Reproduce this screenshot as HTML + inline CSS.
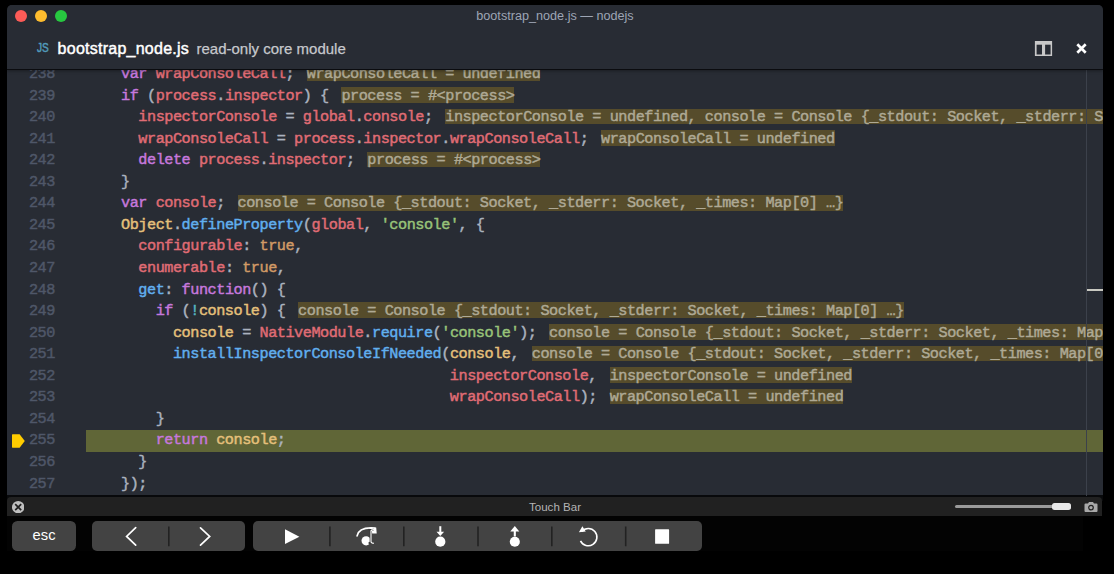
<!DOCTYPE html>
<html>
<head>
<meta charset="utf-8">
<title>bootstrap_node.js — nodejs</title>
<style>
html,body{margin:0;padding:0;}
body{width:1114px;height:574px;background:#000;overflow:hidden;position:relative;font-family:"Liberation Sans",sans-serif;}
#win{position:absolute;left:7px;top:5px;width:1096px;height:490.6px;background:#282c34;border-radius:5px 5px 0 0;overflow:hidden;}
#editor{position:absolute;left:0;top:64px;width:1096px;height:428px;overflow:hidden;background:#282c34;}
#head{position:absolute;left:0;top:0;width:1096px;height:64px;background:#282c34;box-shadow:0 1px 0 #0b0c0f,0 2px 3px rgba(0,0,0,.35);z-index:5;}
.tl{position:absolute;top:5px;width:12px;height:12px;border-radius:50%;}
#title{position:absolute;left:0;width:1096px;top:3.5px;text-align:center;font-size:12.65px;line-height:14px;color:#9da5b4;}
#js{position:absolute;left:30px;top:36px;font-size:12px;color:#519aba;line-height:14px;transform:scaleX(0.84);transform-origin:0 0;-webkit-text-stroke:0.5px #519aba;}
#fname{position:absolute;left:50.6px;top:34.2px;font-size:16px;line-height:20px;color:#fff;letter-spacing:0.25px;-webkit-text-stroke:0.45px #fff;}
#fdesc{position:absolute;left:189.5px;top:34.8px;font-size:15px;line-height:18px;color:#c6c8cc;-webkit-text-stroke:0.25px #c6c8cc;}
.ln,.row{-webkit-text-stroke:0.45px;position:absolute;font-family:"Liberation Mono",monospace;font-size:15.2px;letter-spacing:-0.46px;line-height:21.55px;height:21.55px;white-space:pre;}
.ln{left:21.9px;width:26px;color:#4f5768;text-align:right;}
.row{left:79.4px;width:1017px;color:#abb2bf;z-index:1;}
#hl{position:absolute;left:79px;top:361px;width:1017px;height:22px;background:#606637;}
.k{color:#c678dd}.v{color:#e06c75}.f{color:#61afef}.s{color:#98c379}.c{color:#d19a66}.y{color:#e5c07b}.p{color:#abb2bf}.o{color:#56b6c2}
.iv{position:relative;color:#aea995;margin-left:4px;}
.iv::before{content:"";position:absolute;left:0;right:0;top:0.4px;height:15.8px;background:#564c2b;z-index:-1;}
#ruler{position:absolute;left:1079px;top:0;width:1px;height:428px;background:#3c414b;z-index:3;}
#rmark{position:absolute;left:1080px;top:219.5px;width:16px;height:2px;background:#c9c9c1;z-index:3;}
#bp{position:absolute;left:5px;top:365px;z-index:3;}
#tbh{position:absolute;left:7px;top:497px;width:1095px;height:19px;background:#212121;border-radius:4px 4px 0 0;}
#tbt{position:absolute;left:0;width:1096px;top:3.9px;text-align:center;font-size:11.55px;line-height:13px;color:#b4b4b4;}
#tbarea{position:absolute;left:7px;top:516px;width:1076px;height:35px;background:#030303;}
#tbsep{position:absolute;left:7px;top:495.4px;width:1096px;height:6px;background:#08090b;}
.btn{position:absolute;top:521px;height:29.8px;background:#434343;border-radius:5px;}
.dv{position:absolute;top:5px;width:1px;height:19px;background:#232323;}
</style>
</head>
<body>
<div id="win">
  <div id="head">
    <div class="tl" style="left:8px;background:#fc5b57;"></div>
    <div class="tl" style="left:28px;background:#fdbc2e;"></div>
    <div class="tl" style="left:48px;background:#27c840;"></div>
    <div id="title">bootstrap_node.js — nodejs</div>
    <div id="js">JS</div>
    <div id="fname">bootstrap_node.js</div>
    <div id="fdesc">read-only core module</div>
    <svg style="position:absolute;left:0;top:0" width="1096" height="64" viewBox="7 5 1096 64">
      <rect x="1034.9" y="41" width="17.2" height="15" fill="#c8c8c8"/>
      <rect x="1036.6" y="44.7" width="5.4" height="9.8" fill="#282c34"/>
      <rect x="1045.1" y="44.7" width="5.5" height="9.8" fill="#282c34"/>
      <path d="M1077.3 44.3L1085.7 52.7M1085.7 44.3L1077.3 52.7" stroke="#fff" stroke-width="2.7" fill="none"/>
    </svg>
  </div>
  <div id="editor">
    <div id="hl"></div><div id="ruler"></div><div id="rmark"></div>
    <svg id="bp" width="13" height="14" viewBox="0 0 13 14"><path d="M0.6 0.3H7.6L12.8 7L7.6 13.7H0.6Q0 13.7 0 13.1V0.9Q0 0.3 0.6 0.3Z" fill="#ffcc00"/></svg>
<div class="ln" style="top:-4.95px">238</div><div class="row" style="top:-4.95px"><span class="code">    <span class="k">var</span><span class="p"> </span><span class="v">wrapConsoleCall</span><span class="p">;</span><span class="sp"> </span><span class="iv">wrapConsoleCall = undefined</span></span></div>
<div class="ln" style="top:16.60px">239</div><div class="row" style="top:16.60px"><span class="code">    <span class="k">if</span><span class="p"> (</span><span class="v">process</span><span class="p">.</span><span class="v">inspector</span><span class="p">) {</span><span class="sp"> </span><span class="iv">process = #&lt;process&gt;</span></span></div>
<div class="ln" style="top:38.15px">240</div><div class="row" style="top:38.15px"><span class="code">      <span class="v">inspectorConsole</span><span class="p"> = </span><span class="v">global</span><span class="p">.</span><span class="v">console</span><span class="p">;</span><span class="sp"> </span><span class="iv">inspectorConsole = undefined, console = Console {_stdout: Socket, _stderr: Socket, _times: Map[0] …}</span></span></div>
<div class="ln" style="top:59.70px">241</div><div class="row" style="top:59.70px"><span class="code">      <span class="v">wrapConsoleCall</span><span class="p"> = </span><span class="v">process</span><span class="p">.</span><span class="v">inspector</span><span class="p">.</span><span class="v">wrapConsoleCall</span><span class="p">;</span><span class="sp"> </span><span class="iv">wrapConsoleCall = undefined</span></span></div>
<div class="ln" style="top:81.25px">242</div><div class="row" style="top:81.25px"><span class="code">      <span class="k">delete</span><span class="p"> </span><span class="v">process</span><span class="p">.</span><span class="v">inspector</span><span class="p">;</span><span class="sp"> </span><span class="iv">process = #&lt;process&gt;</span></span></div>
<div class="ln" style="top:102.80px">243</div><div class="row" style="top:102.80px"><span class="code">    <span class="p">}</span></span></div>
<div class="ln" style="top:124.35px">244</div><div class="row" style="top:124.35px"><span class="code">    <span class="k">var</span><span class="p"> </span><span class="v">console</span><span class="p">;</span><span class="sp"> </span><span class="iv">console = Console {_stdout: Socket, _stderr: Socket, _times: Map[0] …}</span></span></div>
<div class="ln" style="top:145.90px">245</div><div class="row" style="top:145.90px"><span class="code">    <span class="y">Object</span><span class="p">.</span><span class="f">defineProperty</span><span class="p">(</span><span class="v">global</span><span class="p">, </span><span class="s">&#x27;console&#x27;</span><span class="p">, {</span></span></div>
<div class="ln" style="top:167.45px">246</div><div class="row" style="top:167.45px"><span class="code">      <span class="v">configurable</span><span class="p">: </span><span class="c">true</span><span class="p">,</span></span></div>
<div class="ln" style="top:189.00px">247</div><div class="row" style="top:189.00px"><span class="code">      <span class="v">enumerable</span><span class="p">: </span><span class="c">true</span><span class="p">,</span></span></div>
<div class="ln" style="top:210.55px">248</div><div class="row" style="top:210.55px"><span class="code">      <span class="f">get</span><span class="p">: </span><span class="k">function</span><span class="p">() {</span></span></div>
<div class="ln" style="top:232.10px">249</div><div class="row" style="top:232.10px"><span class="code">        <span class="k">if</span><span class="p"> (</span><span class="o">!</span><span class="y">console</span><span class="p">) {</span><span class="sp"> </span><span class="iv">console = Console {_stdout: Socket, _stderr: Socket, _times: Map[0] …}</span></span></div>
<div class="ln" style="top:253.65px">250</div><div class="row" style="top:253.65px"><span class="code">          <span class="y">console</span><span class="p"> = </span><span class="v">NativeModule</span><span class="p">.</span><span class="f">require</span><span class="p">(</span><span class="s">&#x27;console&#x27;</span><span class="p">);</span><span class="sp"> </span><span class="iv">console = Console {_stdout: Socket, _stderr: Socket, _times: Map[0] …}</span></span></div>
<div class="ln" style="top:275.20px">251</div><div class="row" style="top:275.20px"><span class="code">          <span class="f">installInspectorConsoleIfNeeded</span><span class="p">(</span><span class="y">console</span><span class="p">,</span><span class="sp"> </span><span class="iv">console = Console {_stdout: Socket, _stderr: Socket, _times: Map[0] …}</span></span></div>
<div class="ln" style="top:296.75px">252</div><div class="row" style="top:296.75px"><span class="code">                                          <span class="v">inspectorConsole</span><span class="p">,</span><span class="sp"> </span><span class="iv">inspectorConsole = undefined</span></span></div>
<div class="ln" style="top:318.30px">253</div><div class="row" style="top:318.30px"><span class="code">                                          <span class="v">wrapConsoleCall</span><span class="p">);</span><span class="sp"> </span><span class="iv">wrapConsoleCall = undefined</span></span></div>
<div class="ln" style="top:339.85px">254</div><div class="row" style="top:339.85px"><span class="code">        <span class="p">}</span></span></div>
<div class="ln" style="top:361.40px">255</div><div class="row" style="top:361.40px"><span class="code">        <span class="k">return</span><span class="p"> </span><span class="y">console</span><span class="p">;</span></span></div>
<div class="ln" style="top:382.95px">256</div><div class="row" style="top:382.95px"><span class="code">      <span class="p">}</span></span></div>
<div class="ln" style="top:404.50px">257</div><div class="row" style="top:404.50px"><span class="code">    <span class="p">});</span></span></div>
  </div>
</div>
<div id="tbarea"></div>
<div id="tbsep"></div>
<div id="tbh">
  <div id="tbt">Touch Bar</div>
  <svg style="position:absolute;left:4.9px;top:3.7px" width="12.4" height="12.4" viewBox="0 0 12.4 12.4"><circle cx="6.2" cy="6.2" r="6.2" fill="#bfbfbf"/><path d="M3.2 3.2L9.2 9.2M9.2 3.2L3.2 9.2" stroke="#212121" stroke-width="1.7"/></svg>
  <div style="position:absolute;left:948px;top:8px;width:100px;height:3px;border-radius:2px;background:#9a9a9a;"></div>
  <div style="position:absolute;left:1045px;top:6px;width:19px;height:7px;border-radius:2.5px;background:#e8e8e8;"></div>
  <svg style="position:absolute;left:1077px;top:4px" width="14" height="12" viewBox="0 0 14 12"><path d="M1.5 2.5H4L5 1H9L10 2.5H12.5Q13.5 2.5 13.5 3.5V10Q13.5 11 12.5 11H1.5Q0.5 11 0.5 10V3.5Q0.5 2.5 1.5 2.5Z" fill="#a9a9a9"/><circle cx="7" cy="6.6" r="2.3" fill="none" stroke="#212121" stroke-width="1.2"/></svg>
</div>
<div class="btn" style="left:12px;width:64.2px;border-radius:5.5px;"><div style="position:absolute;left:0;width:64px;top:6px;text-align:center;font-size:14.7px;line-height:16px;color:#fff;letter-spacing:0.1px;">esc</div></div>
<div class="btn" style="left:92.2px;width:152.7px;"></div>
<div class="btn" style="left:253.1px;width:448.9px;"></div>
<svg style="position:absolute;left:0;top:516px" width="1114" height="58" viewBox="0 516 1114 58">
  <g stroke="#222" stroke-width="1.6" fill="none">
    <path d="M168.8 526.4V546.3M329.9 526.4V546.3M403.8 526.4V546.3M478 526.4V546.3M551.8 526.4V546.3M625.7 526.4V546.3"/>
  </g>
  <g stroke="#fff" stroke-width="1.7" fill="none" stroke-linecap="round" stroke-linejoin="miter">
    <path d="M135.7 527.7L126.6 536.4L135.7 545.2"/>
    <path d="M200.5 527.9L209.7 536.4L200.5 545.2"/>
  </g>
  <!-- play -->
  <path d="M285 529.3L299.4 536.7L285 544.1Z" fill="#fff"/>
  <!-- step over -->
  <path d="M357.1 535.9C358.3 530 364.5 527.9 371 527.9L375 528.2" fill="none" stroke="#fff" stroke-width="1.7" stroke-linecap="round"/>
  <path d="M371.6 528.4L376.2 527.5L376.7 533.6L372.2 533.6Z" fill="#fff"/>
  <circle cx="366.1" cy="540.8" r="4.6" fill="#fff"/>
  <path d="M368.6 529.6Q370.6 529.6 370.6 531.2V541.4Q370.6 543 368.6 543M373.8 529.6Q370.6 529.6 370.6 531.2M370.6 541.4Q370.6 543.2 373.8 543.2" fill="none" stroke="#3a3a3a" stroke-width="1.9"/>
  <path d="M371 530.5V542.2M374 529.6Q371 529.6 371 531.2M371 541.4Q371 543.2 374 543.2" fill="none" stroke="#fff" stroke-width="1.1"/>
  <!-- step into -->
  <path d="M440.3 526.2V533" stroke="#fff" stroke-width="2" fill="none"/>
  <path d="M436.5 531.7H444.1L440.3 535.9Z" fill="#fff"/>
  <circle cx="440.3" cy="541.7" r="5.1" fill="#fff"/>
  <!-- step out -->
  <path d="M514.8 530.5V536.5" stroke="#fff" stroke-width="2.1" fill="none"/>
  <path d="M510.3 531.4H519.3L514.8 525.9Z" fill="#fff"/>
  <circle cx="514.8" cy="541.7" r="5.05" fill="#fff"/>
  <!-- restart -->
  <path d="M581.9 531.4A8.6 8.6 0 1 1 580.5 540.8" fill="none" stroke="#fff" stroke-width="1.6"/>
  <path d="M578.9 532.2L585.8 531.6L582.4 526.2Z" fill="#fff"/>
  <!-- stop -->
  <rect x="655.1" y="529.3" width="14" height="14.5" rx="0.6" fill="#fff"/>
</svg>
</body>
</html>
